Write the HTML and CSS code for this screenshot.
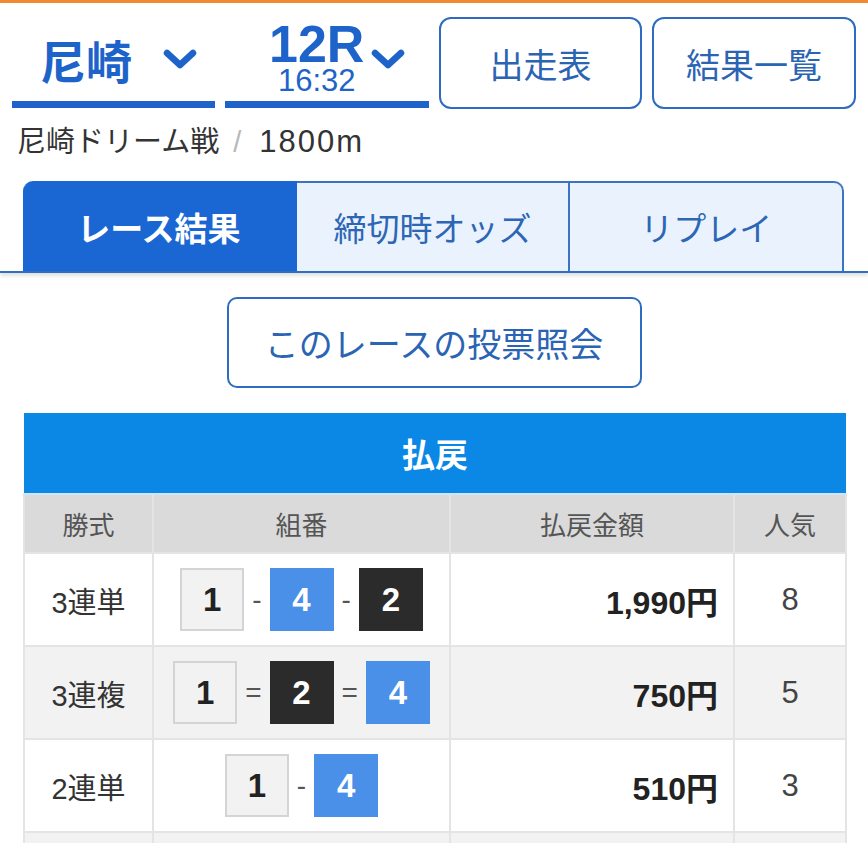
FILE: index.html
```html
<!DOCTYPE html>
<html lang="ja">
<head>
<meta charset="UTF-8">
<meta name="viewport" content="width=device-width, initial-scale=1.0">
<title>尼崎 12R レース結果</title>
<link rel="stylesheet" href="styles.css">
</head>
<body>

<div class="topbar"></div>

<div class="nav">
    <div class="select select-place">
        <span class="place">尼崎</span>
        <svg class="chev" width="36" height="22" viewBox="0 0 36 22"><polyline points="5,5 18,17 31,5" /></svg>
    </div>
    <div class="select select-race">
        <div class="race">
            <span class="race-no">12R</span>
            <span class="race-time">16:32</span>
        </div>
        <svg class="chev" width="36" height="22" viewBox="0 0 36 22"><polyline points="5,5 18,17 31,5" /></svg>
    </div>
    <a class="nav-btn" href="#">出走表</a>
    <a class="nav-btn" href="#">結果一覧</a>
</div>

<div class="race-name">尼崎ドリーム戦<span class="slash">/</span><span class="dist">1800m</span></div>

<div class="tabs">
    <div class="tab active">レース結果</div>
    <div class="tab">締切時オッズ</div>
    <div class="tab">リプレイ</div>
</div>

<div class="vote-wrap">
    <a class="vote-btn" href="#">このレースの投票照会</a>
</div>

<table class="payout">
    <colgroup>
        <col style="width: 129px">
        <col style="width: 297px">
        <col style="width: 284px">
        <col style="width: 112px">
    </colgroup>
    <thead>
        <tr><th class="title" colspan="4">払戻</th></tr>
        <tr class="head">
            <th>勝式</th>
            <th>組番</th>
            <th>払戻金額</th>
            <th>人気</th>
        </tr>
    </thead>
    <tbody>
        <tr>
            <td class="kind">3連単</td>
            <td class="combo"><span class="num n1">1</span><span class="sep">-</span><span class="num n4">4</span><span class="sep">-</span><span class="num n2">2</span></td>
            <td class="yen">1,990円</td>
            <td class="pop">8</td>
        </tr>
        <tr class="odd">
            <td class="kind">3連複</td>
            <td class="combo"><span class="num n1">1</span><span class="sep">=</span><span class="num n2">2</span><span class="sep">=</span><span class="num n4">4</span></td>
            <td class="yen">750円</td>
            <td class="pop">5</td>
        </tr>
        <tr>
            <td class="kind">2連単</td>
            <td class="combo"><span class="num n1">1</span><span class="sep">-</span><span class="num n4">4</span></td>
            <td class="yen">510円</td>
            <td class="pop">3</td>
        </tr>
        <tr class="odd">
            <td></td>
            <td></td>
            <td></td>
            <td></td>
        </tr>
    </tbody>
</table>

</body>
</html>
```

FILE: styles.css
```css
body {
    margin: 0;
    background-color: #fff;
    font-family: "Liberation Sans", "Noto Sans CJK JP", sans-serif;
    color: #333;
}

a {
    text-decoration: none;
}

.topbar {
    height: 3px;
    background-color: #f0892f;
}

/* 場・レース選択とボタン */
.nav {
    display: flex;
    align-items: flex-start;
    gap: 10px;
    padding: 14px 12px 0;
}

.select {
    display: flex;
    align-items: center;
    box-sizing: border-box;
    height: 91px;
    border-bottom: 7px solid #1d63c9;
}

.select-place {
    width: 203px;
    padding-left: 28px;
    gap: 30px;
}

.select-race {
    width: 204px;
    padding-left: 44px;
    gap: 6px;
}

.place {
    font-family: "Noto Sans CJK JP", sans-serif;
    font-size: 46px;
    font-weight: bold;
    line-height: 1;
    color: #1d63c9;
}

.race {
    display: flex;
    flex-direction: column;
    align-items: center;
    color: #1d63c9;
}

.race-no {
    font-size: 52px;
    font-weight: bold;
    line-height: 44px;
}

.race-time {
    font-size: 31px;
    line-height: 30px;
}

.chev polyline {
    fill: none;
    stroke: #1d63c9;
    stroke-width: 6.5;
    stroke-linecap: round;
    stroke-linejoin: round;
}

.nav-btn {
    display: flex;
    align-items: center;
    justify-content: center;
    box-sizing: border-box;
    width: 203px;
    height: 92px;
    border: 2px solid #2d6cc0;
    border-radius: 12px;
    font-family: "Noto Sans CJK JP", sans-serif;
    font-size: 34px;
    color: #2a64b3;
}

.nav-btn:last-child {
    width: 204px;
}

.race-name {
    margin-top: 16px;
    padding-left: 17px;
    font-size: 29px;
    line-height: 34px;
    color: #333;
}

.race-name .slash {
    margin: 0 18px 0 14px;
    color: #b8b8b8;
}

.race-name .dist {
    font-size: 31px;
    letter-spacing: 2px;
}

/* タブ */
.tabs {
    display: flex;
    margin-top: 22px;
    padding: 0 24px 0 23px;
    border-bottom: 2px solid #2f6fc3;
    box-shadow: 0 3px 4px rgba(0, 0, 0, 0.12);
}

.tab {
    flex: 1;
    display: flex;
    align-items: center;
    justify-content: center;
    box-sizing: border-box;
    height: 90px;
    background-color: #eaf3fd;
    border-top: 2px solid #3b74c2;
    border-right: 2px solid #3b74c2;
    font-family: "Noto Sans CJK JP", sans-serif;
    font-size: 33px;
    color: #2c66b5;
}

.tab.active {
    background-color: #1a67d3;
    border-color: #1a67d3;
    border-top-left-radius: 10px;
    color: #fff;
    font-weight: bold;
}

.tab:last-child {
    border-top-right-radius: 10px;
}

.vote-wrap {
    padding-top: 24px;
    text-align: center;
}

.vote-btn {
    display: inline-flex;
    align-items: center;
    justify-content: center;
    box-sizing: border-box;
    width: 415px;
    height: 91px;
    border: 2px solid #2d6cc0;
    border-radius: 10px;
    font-family: "Noto Sans CJK JP", sans-serif;
    font-size: 34px;
    color: #2a64b3;
}

/* 払戻テーブル */
.payout {
    width: 822px;
    margin: 25px 23px 0;
    border-collapse: collapse;
    table-layout: fixed;
}

.payout th,
.payout td {
    border: 2px solid #e4e4e4;
    padding: 0;
    text-align: center;
}

.payout th.title {
    height: 80px;
    background-color: #0b88e6;
    border: none;
    border-bottom: 2px solid #cfe5f8;
    color: #fff;
    font-family: "Noto Sans CJK JP", sans-serif;
    font-size: 33px;
    font-weight: bold;
}

.payout .head th {
    height: 57px;
    background-color: #dadada;
    border-top: none;
    font-family: "Noto Sans CJK JP", sans-serif;
    font-size: 26px;
    font-weight: normal;
    color: #555;
}

.payout td {
    height: 91px;
    font-size: 28px;
    color: #333;
}

.payout td.kind {
    font-size: 29px;
}

.payout tr.odd td {
    background-color: #f2f2f2;
}

.payout td.yen {
    padding-right: 15px;
    text-align: right;
    font-size: 32px;
    font-weight: bold;
    color: #222;
}

.payout td.pop {
    font-size: 31px;
    color: #444;
}

.combo {
    white-space: nowrap;
}

.num {
    display: inline-flex;
    align-items: center;
    justify-content: center;
    box-sizing: border-box;
    width: 64px;
    height: 63px;
    vertical-align: middle;
    font-size: 33px;
    font-weight: bold;
}

.num.n1 {
    background-color: #f2f2f2;
    border: 2px solid #d4d4d4;
    color: #222;
}

.num.n2 {
    background-color: #2b2b2b;
    color: #fff;
}

.num.n4 {
    background-color: #4a8fe8;
    color: #fff;
}

.sep {
    display: inline-block;
    padding: 0 8px;
    vertical-align: middle;
    font-size: 28px;
    color: #555;
}
```
